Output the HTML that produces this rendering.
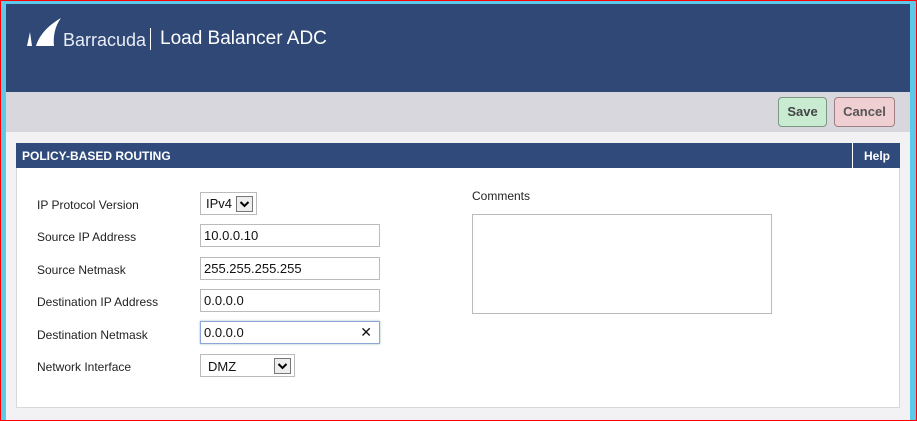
<!DOCTYPE html>
<html><head><style>
*{margin:0;padding:0;box-sizing:border-box}
body{width:917px;height:421px;overflow:hidden;font-family:"Liberation Sans",Arial,sans-serif;background:#f2f2f5;position:relative}
.abs{position:absolute}
.lbl{position:absolute;left:37px;font-size:12px;color:#222}
.inp{position:absolute;left:200px;width:180px;height:23px;border:1px solid #bbb;background:#fff;font-size:13px;padding:3px 0 0 3px;color:#111}
.sel{position:absolute;left:200px;border:1px solid #bbb;background:#fff;font-size:13px;color:#111;height:23px}
.dd{position:absolute;top:3px;width:17px;height:16px;border:1px solid #777;background:#eee}
</style></head><body>
<div class="abs" style="left:0;top:0;width:917px;height:421px;border:1px solid #f00"></div>
<div class="abs" style="left:1px;top:1px;width:5px;height:419px;background:#5ec8e8"></div>
<div class="abs" style="left:910px;top:1px;width:6px;height:419px;background:#5ec8e8"></div>
<div class="abs" style="left:1px;top:1px;width:915px;height:3px;background:#5ec8e8"></div>
<div class="abs" style="left:6px;top:4px;width:904px;height:88px;background:#2f4876"></div>
<svg class="abs" style="left:25px;top:18px" width="38" height="28" viewBox="0 0 38 28"><path d="M2 28 L5 14 L7 28Z M11 28 C14 18 22 8 36 0 C30 8 28 18 29 28Z" fill="#fff"/></svg>
<div class="abs" style="left:63px;top:30px;color:#e8ecf4;font-size:18px">Barracuda</div>
<div class="abs" style="left:150px;top:28px;width:1px;height:22px;background:#fff"></div>
<div class="abs" style="left:160px;top:28px;color:#fff;font-size:19px">Load Balancer ADC</div>
<div class="abs" style="left:6px;top:92px;width:904px;height:40px;background:#d7d7dd"></div>
<div class="abs" style="left:778px;top:97px;width:49px;height:30px;background:#c9ebd1;border:1px solid #7a9a80;border-radius:4px;font-size:13px;font-weight:bold;color:#444;text-align:center;line-height:28px">Save</div>
<div class="abs" style="left:834px;top:97px;width:61px;height:30px;background:#f0cfd2;border:1px solid #a08085;border-radius:4px;font-size:13px;font-weight:bold;color:#555;text-align:center;line-height:28px">Cancel</div>
<div class="abs" style="left:16px;top:143px;width:884px;height:265px;background:#fff;border:1px solid #d8d8d8"></div>
<div class="abs" style="left:16px;top:143px;width:884px;height:25px;background:#2f4a7b"></div>
<div class="abs" style="left:22px;top:149px;color:#fff;font-size:12px;font-weight:bold">POLICY-BASED ROUTING</div>
<div class="abs" style="left:852px;top:143px;width:1px;height:25px;background:#fff"></div>
<div class="abs" style="left:864px;top:149px;color:#fff;font-size:12px;font-weight:bold">Help</div>
<div class="lbl" style="top:198px">IP Protocol Version</div>
<div class="lbl" style="top:230px">Source IP Address</div>
<div class="lbl" style="top:263px">Source Netmask</div>
<div class="lbl" style="top:295px">Destination IP Address</div>
<div class="lbl" style="top:328px">Destination Netmask</div>
<div class="lbl" style="top:360px">Network Interface</div>
<div class="sel" style="top:192px;width:57px"><span style="position:absolute;left:5px;top:3px">IPv4</span><div class="dd" style="left:35px"><svg width="15" height="14" viewBox="0 0 15 14"><path d="M3.5 5 L7.5 9 L11.5 5" stroke="#000" stroke-width="2" fill="none"/></svg></div></div>
<div class="inp" style="top:224px">10.0.0.10</div>
<div class="inp" style="top:257px">255.255.255.255</div>
<div class="inp" style="top:289px">0.0.0.0</div>
<div class="inp" style="top:321px;border-color:#8fa6d8;box-shadow:0 0 2px #9bb">0.0.0.0<span style="position:absolute;right:7px;top:2px;font-size:14px">✕</span></div>
<div class="sel" style="top:354px;width:95px"><span style="position:absolute;left:7px;top:4px">DMZ</span><div class="dd" style="left:73px"><svg width="15" height="14" viewBox="0 0 15 14"><path d="M3.5 5 L7.5 9 L11.5 5" stroke="#000" stroke-width="2" fill="none"/></svg></div></div>
<div class="abs" style="left:472px;top:189px;font-size:12px;color:#222">Comments</div>
<div class="abs" style="left:472px;top:214px;width:300px;height:100px;border:1px solid #bbb;background:#fff"></div>
</body></html>
